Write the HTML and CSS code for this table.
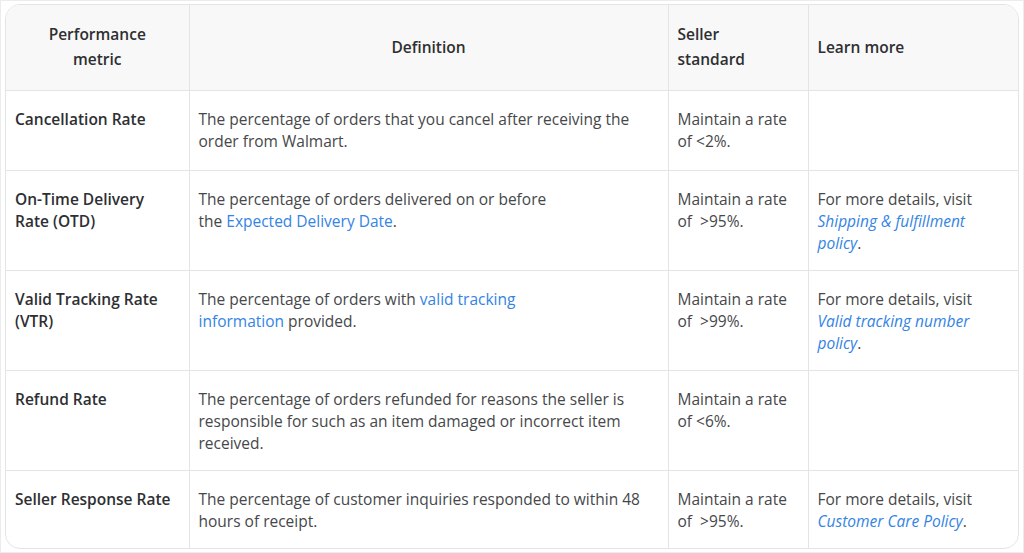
FILE: index.html
```html
<!DOCTYPE html>
<html lang="en">
<head>
<meta charset="utf-8">
<title>Performance metrics</title>
<link rel="stylesheet" href="styles.css">
</head>
<body>
<div class="frame">
  <div class="table-wrap">
    <table class="metrics">
      <colgroup>
        <col class="c1"><col class="c2"><col class="c3"><col class="c4">
      </colgroup>
      <thead>
        <tr>
          <th class="center">Performance<br>metric</th>
          <th class="center">Definition</th>
          <th>Seller<br>standard</th>
          <th>Learn more</th>
        </tr>
      </thead>
      <tbody>
        <tr class="first">
          <td class="name">Cancellation Rate</td>
          <td>The percentage of orders that you cancel after receiving the order from Walmart.</td>
          <td>Maintain a rate of&nbsp;&lt;2%.</td>
          <td></td>
        </tr>
        <tr>
          <td class="name">On-Time Delivery Rate (OTD)</td>
          <td>The percentage of orders delivered on or before<br>the <a href="#">Expected Delivery Date</a>.</td>
          <td>Maintain a rate of&nbsp; &gt;95%.</td>
          <td>For more details, visit<br><a href="#" class="it">Shipping &amp; fulfillment policy</a>.</td>
        </tr>
        <tr>
          <td class="name">Valid Tracking Rate (VTR)</td>
          <td>The percentage of orders with <a href="#">valid tracking<br>information</a> provided.</td>
          <td>Maintain a rate of&nbsp; &gt;99%.</td>
          <td>For more details, visit<br><a href="#" class="it">Valid tracking number policy</a>.</td>
        </tr>
        <tr>
          <td class="name">Refund Rate</td>
          <td>The percentage of orders refunded for reasons the seller is responsible for such as an item damaged or incorrect item received.</td>
          <td>Maintain a rate of&nbsp;&lt;6%.</td>
          <td></td>
        </tr>
        <tr>
          <td class="name">Seller Response Rate</td>
          <td>The percentage of customer inquiries responded to within 48 hours of receipt.</td>
          <td>Maintain a rate of&nbsp; &gt;95%.</td>
          <td>For more details, visit<br><a href="#" class="it">Customer Care Policy</a>.</td>
        </tr>
      </tbody>
    </table>
  </div>
</div>
</body>
</html>
```
FILE: styles.css
```css
* { box-sizing: border-box; }
html, body {
  margin: 0;
  padding: 0;
  background: #ffffff;
}
body {
  font-family: "Open Sans", Lato, "Liberation Sans", sans-serif;
  font-size: 15.5px;
  color: #46474a;
}
.frame {
  width: 1024px;
  height: 553px;
  border: 1px solid #ececec;
  padding: 3px 0 0 4px;
}
.table-wrap {
  width: 1014px;
  border: 1px solid #e3e4e5;
  border-radius: 15px;
  overflow: hidden;
}
.metrics {
  width: 100%;
  border-collapse: collapse;
  table-layout: fixed;
}
.c1 { width: 183px; }
.c2 { width: 479px; }
.c3 { width: 140px; }
.c4 { width: auto; }
.metrics th,
.metrics td {
  border: 1px solid #e3e4e5;
  text-align: left;
  line-height: 22px;
}
.metrics tr > :first-child { border-left: none; }
.metrics tr > :last-child { border-right: none; }
.metrics thead th { border-top: none; }
.metrics tbody tr:last-child td { border-bottom: none; }
.metrics th {
  background: #f8f8f8;
  color: #2e2f32;
  font-weight: 600;
  vertical-align: middle;
  padding: 17px 9px 17px 9px;
  line-height: 25px;
  height: 85px;
}
.metrics th.center { text-align: center; }
.metrics td {
  vertical-align: top;
  padding: 17px 9px 16px 9px;
}
.metrics tr.first td { padding-bottom: 18px; }
.metrics td.name {
  font-weight: 600;
  color: #2e2f32;
  padding-left: 9px;
}
.metrics a {
  color: #3384e4;
  text-decoration: none;
}
.metrics a.it { font-style: italic; }
```
